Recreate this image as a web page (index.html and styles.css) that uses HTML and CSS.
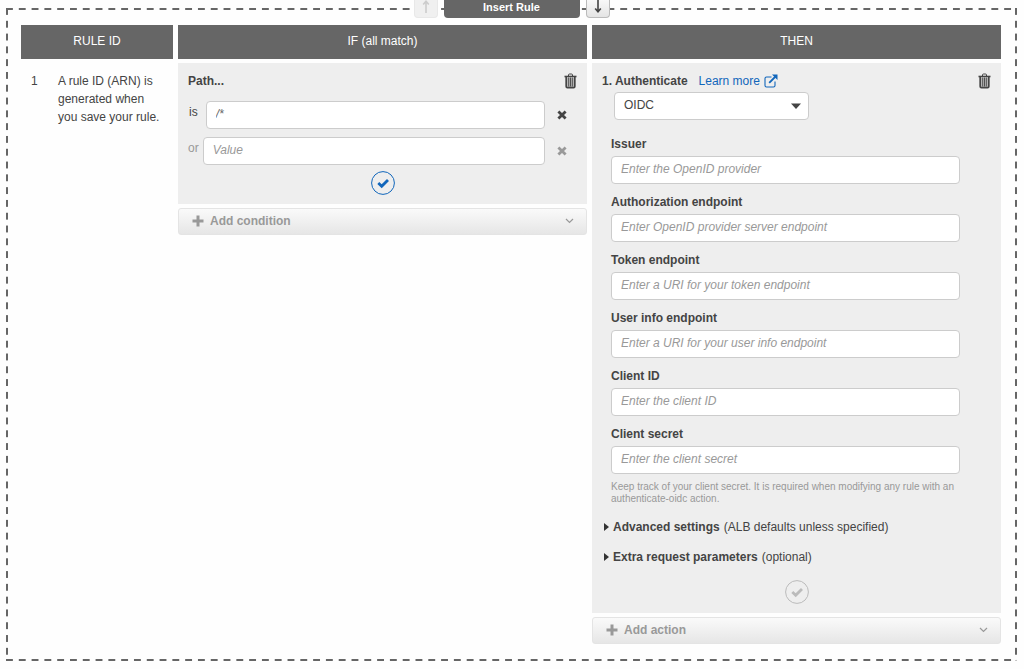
FILE: index.html
```html
<!DOCTYPE html>
<html lang="en">
<head>
  <meta charset="UTF-8" />
  <title>Insert Rule</title>
  <link rel="stylesheet" href="styles.css">
</head>
<body>
  <svg class="sprite" aria-hidden="true">
    <symbol id="trash" viewBox="0 0 13 16">
      <path d="M4.5 3V2q0-1 1-1h2q1 0 1 1v1" fill="none" stroke="currentColor"/>
      <path d="M0.5 3.5h12" fill="none" stroke="currentColor" stroke-width="1.6"/>
      <path d="M2.2 4v9.5q0 1.2 1.2 1.2h6.2q1.2 0 1.2-1.2V4" fill="#bbb" stroke="currentColor" stroke-width="1.7"/>
      <path d="M4.7 4.5v9M6.5 4.5v9M8.3 4.5v9" fill="none" stroke="currentColor" stroke-width="0.9"/>
    </symbol>
    <symbol id="cross" viewBox="0 0 10 10">
      <path d="M1.4 1.4l7.2 7.2M8.6 1.4L1.4 8.6" fill="none" stroke="currentColor" stroke-width="2.8"/>
    </symbol>
    <symbol id="check" viewBox="0 0 24 24">
      <circle cx="12" cy="12" r="11.4" fill="none" stroke="currentColor" stroke-width="1"/>
      <path d="M7.3 12l3.4 3.2 6.3-6.3" fill="none" stroke="currentColor" stroke-width="2.8"/>
    </symbol>
    <symbol id="plus" viewBox="0 0 12 12">
      <path d="M6 0.5v11M0.5 6h11" fill="none" stroke="currentColor" stroke-width="3"/>
    </symbol>
    <symbol id="chevron" viewBox="0 0 9 6">
      <path d="M1 1l3.5 3.5L8 1" fill="none" stroke="currentColor" stroke-width="1.2"/>
    </symbol>
  </svg>

  <main class="frame">
    <div class="toolbar">
      <button class="move" aria-label="Move up" disabled>
        <svg width="8" height="13" viewBox="0 0 8 13"><path d="M4 13V2M1.2 4.5L4 1.2l2.8 3.3" fill="none" stroke="currentColor" stroke-width="1.6"/></svg>
      </button>
      <button class="insert">Insert Rule</button>
      <button class="move" aria-label="Move down">
        <svg width="8" height="13" viewBox="0 0 8 13"><path d="M4 0v11M1.2 8.5L4 11.8l2.8-3.3" fill="none" stroke="currentColor" stroke-width="1.6"/></svg>
      </button>
    </div>

    <table class="rules">
      <thead>
        <tr>
          <th class="col-id">RULE ID</th>
          <th>IF (all match)</th>
          <th>THEN</th>
        </tr>
      </thead>
      <tbody>
        <tr>
          <td>
            <div class="rule-id">
              <span class="number">1</span>
              <span>A rule ID (ARN) is generated when you save your rule.</span>
            </div>
          </td>
          <td>
            <div class="card">
              <div class="card-head">
                <b>Path...</b>
                <button class="icon trash" aria-label="Delete condition"><svg width="13" height="16"><use href="#trash"/></svg></button>
              </div>
              <div class="path-row">
                <label class="is" for="path1">is</label>
                <input type="text" id="path1" value="/*">
                <button class="icon" aria-label="Remove value"><svg width="10" height="10"><use href="#cross"/></svg></button>
              </div>
              <div class="path-row muted">
                <label for="path2">or</label>
                <input type="text" id="path2" placeholder="Value">
                <button class="icon" aria-label="Remove value"><svg width="10" height="10"><use href="#cross"/></svg></button>
              </div>
              <button class="icon confirm active" aria-label="Confirm condition"><svg width="24" height="24"><use href="#check"/></svg></button>
            </div>
            <button class="add">
              <svg width="12" height="12"><use href="#plus"/></svg>
              <span>Add condition</span>
              <svg class="chevron" width="9" height="6"><use href="#chevron"/></svg>
            </button>
          </td>
          <td>
            <div class="card">
              <div class="card-head">
                <label for="action"><b>1. Authenticate</b></label>
                <a class="learn" href="#">Learn more
                  <svg width="14" height="14" viewBox="0 0 14 14">
                    <path d="M7.5 3H2.5Q1 3 1 4.5v7Q1 13 2.5 13h7q1.5 0 1.5-1.5V7.5" fill="none" stroke="currentColor" stroke-width="1.1"/>
                    <path d="M5.2 8.8L11.5 2.5" fill="none" stroke="currentColor" stroke-width="1.8"/>
                    <path d="M8 0.5h5.5V6z" fill="currentColor"/>
                  </svg>
                </a>
                <button class="icon trash" aria-label="Delete action"><svg width="13" height="16"><use href="#trash"/></svg></button>
              </div>
              <div class="select">
                <select id="action">
                  <option>OIDC</option>
                  <option>Amazon Cognito</option>
                </select>
                <svg width="10" height="6" viewBox="0 0 10 6"><path d="M0 0.5h10L5 6z" fill="currentColor"/></svg>
              </div>

              <div class="fields">
                <div class="field">
                  <label for="issuer">Issuer</label>
                  <input type="text" id="issuer" placeholder="Enter the OpenID provider">
                </div>
                <div class="field">
                  <label for="auth">Authorization endpoint</label>
                  <input type="text" id="auth" placeholder="Enter OpenID provider server endpoint">
                </div>
                <div class="field">
                  <label for="token">Token endpoint</label>
                  <input type="text" id="token" placeholder="Enter a URI for your token endpoint">
                </div>
                <div class="field">
                  <label for="userinfo">User info endpoint</label>
                  <input type="text" id="userinfo" placeholder="Enter a URI for your user info endpoint">
                </div>
                <div class="field">
                  <label for="client">Client ID</label>
                  <input type="text" id="client" placeholder="Enter the client ID">
                </div>
                <div class="field">
                  <label for="secret">Client secret</label>
                  <input type="text" id="secret" placeholder="Enter the client secret">
                </div>
              </div>
              <p class="hint">Keep track of your client secret. It is required when modifying any rule with an authenticate-oidc action.</p>

              <details>
                <summary><b>Advanced settings</b> (ALB defaults unless specified)</summary>
              </details>
              <details>
                <summary><b>Extra request parameters</b> (optional)</summary>
              </details>
              <button class="icon confirm" aria-label="Confirm action" disabled><svg width="24" height="24"><use href="#check"/></svg></button>
            </div>
            <button class="add">
              <svg width="12" height="12"><use href="#plus"/></svg>
              <span>Add action</span>
              <svg class="chevron" width="9" height="6"><use href="#chevron"/></svg>
            </button>
          </td>
        </tr>
      </tbody>
    </table>
  </main>
</body>
</html>
```

FILE: styles.css
```css
* { box-sizing: border-box; }
body {
  margin: 0;
  padding: 8px 7px 8px 6px;
  font-family: "Liberation Sans", Arial, sans-serif;
  font-size: 12px;
  line-height: 16px;
  color: #444;
  background: #fefefe;
}
button, input, select { font: inherit; color: inherit; }
button { cursor: pointer; padding: 0; }
svg { display: block; }
.sprite { position: absolute; width: 0; height: 0; }

/* dashed outline, one gradient for each side */
.frame {
  position: relative;
  padding: 13px 11px 13px 10px;
  background-image:
    linear-gradient(90deg, #666 7px, transparent 7px),
    linear-gradient(90deg, #666 7px, transparent 7px),
    linear-gradient(#666 7px, transparent 7px),
    linear-gradient(#666 7px, transparent 7px);
  background-size: calc(100% / 79) 2px, calc(100% / 79) 2px, 2px calc(100% / 51), 2px calc(100% / 51);
  background-position: left top, left bottom, left top, right top;
  background-repeat: repeat-x, repeat-x, repeat-y, repeat-y;
}

.toolbar {
  position: absolute;
  top: -8px;
  left: 0;
  right: 0;
  display: flex;
  justify-content: center;
  gap: 6px;
}
.toolbar button {
  height: 18px;
  border-radius: 0 0 4px 4px;
}
.toolbar .insert {
  width: 136px;
  padding-bottom: 3px;
  border: none;
  background: #666;
  color: #fff;
  font-size: 11px;
  line-height: 15px;
  font-weight: bold;
}
.move {
  display: flex;
  justify-content: center;
  width: 24px;
  border: 1px solid #bbb;
  border-top: none;
  background: linear-gradient(#f8f8f8, #e4e4e4);
}
.move:disabled { border-color: #e8e8e8; color: #ccc; background: #f0f0f0; }

.rules {
  width: 100%;
  table-layout: fixed;
  border-spacing: 5px 4px;
}
.rules th {
  height: 34px;
  padding: 0 0 2px;
  background: #666;
  color: #fff;
  font-weight: normal;
}
.rules td { padding: 0; vertical-align: top; }
.rules .col-id { width: 152px; }
.rule-id {
  display: flex;
  padding: 9px 10px;
  line-height: 18px;
}
.number { flex: 0 0 27px; }

.card {
  padding: 10px 9px 9px 10px;
  background: #eee;
}
.card-head {
  display: flex;
  align-items: center;
  height: 16px;
}
.icon {
  display: block;
  border: none;
  background: none;
}
.trash { margin-left: auto; width: 15px; }
.trash svg { margin: 0 auto; }

input, select {
  height: 28px;
  padding: 0 9px 2px;
  border: 1px solid #ccc;
  border-radius: 4px;
  background: #fff;
}
input { font-style: italic; color: #666; }
::placeholder { color: #999; opacity: 1; }

.path-row {
  display: flex;
  align-items: center;
  gap: 4px;
  margin: 12px 9px 8px 0;
}
.path-row + .path-row { margin-top: 8px; margin-bottom: 6px; }
.path-row label { padding-bottom: 6px; }
.path-row .is { padding-left: 1px; padding-right: 4px; }
.path-row input { flex: 1; min-width: 0; }
.path-row .icon { margin-left: 8px; margin-right: 2px; }
.muted { color: #999; }

.confirm { width: 24px; margin: 6px auto 0; }
.confirm:disabled { margin-top: 15px; color: #bbb; }
.active { color: #1166bb; }

.add {
  display: flex;
  align-items: center;
  gap: 6px;
  width: 100%;
  height: 27px;
  margin-top: 4px;
  padding: 0 12px 2px 13px;
  border: 1px solid #e4e4e4;
  border-radius: 3px;
  background: linear-gradient(#fafafa, #e6e6e6);
  color: #999;
  font-weight: bold;
}
.chevron { margin-left: auto; }

.learn {
  display: flex;
  align-items: center;
  gap: 4px;
  margin-left: 11px;
  color: #1166bb;
  text-decoration: none;
}
.select {
  position: relative;
  width: 195px;
  margin: 3px 0 16px 12px;
}
.select select { width: 100%; appearance: none; }
.select svg { position: absolute; right: 8px; top: 11px; pointer-events: none; }

.fields {
  display: flex;
  flex-direction: column;
  gap: 10px;
  padding: 0 32px 0 9px;
}
.field label { display: block; margin-bottom: 4px; font-weight: bold; }
.field input { display: block; width: 100%; }
.hint {
  margin: 7px 24px 14px 9px;
  font-size: 10px;
  line-height: 12px;
  color: #999;
}
details { margin-bottom: 14px; }
summary {
  display: flex;
  align-items: center;
  gap: 4px;
  list-style: none;
  cursor: pointer;
}
summary::before {
  content: "";
  margin-left: 2px;
  border: 4px solid transparent;
  border-left: 5px solid #333;
  border-right: none;
}
```
